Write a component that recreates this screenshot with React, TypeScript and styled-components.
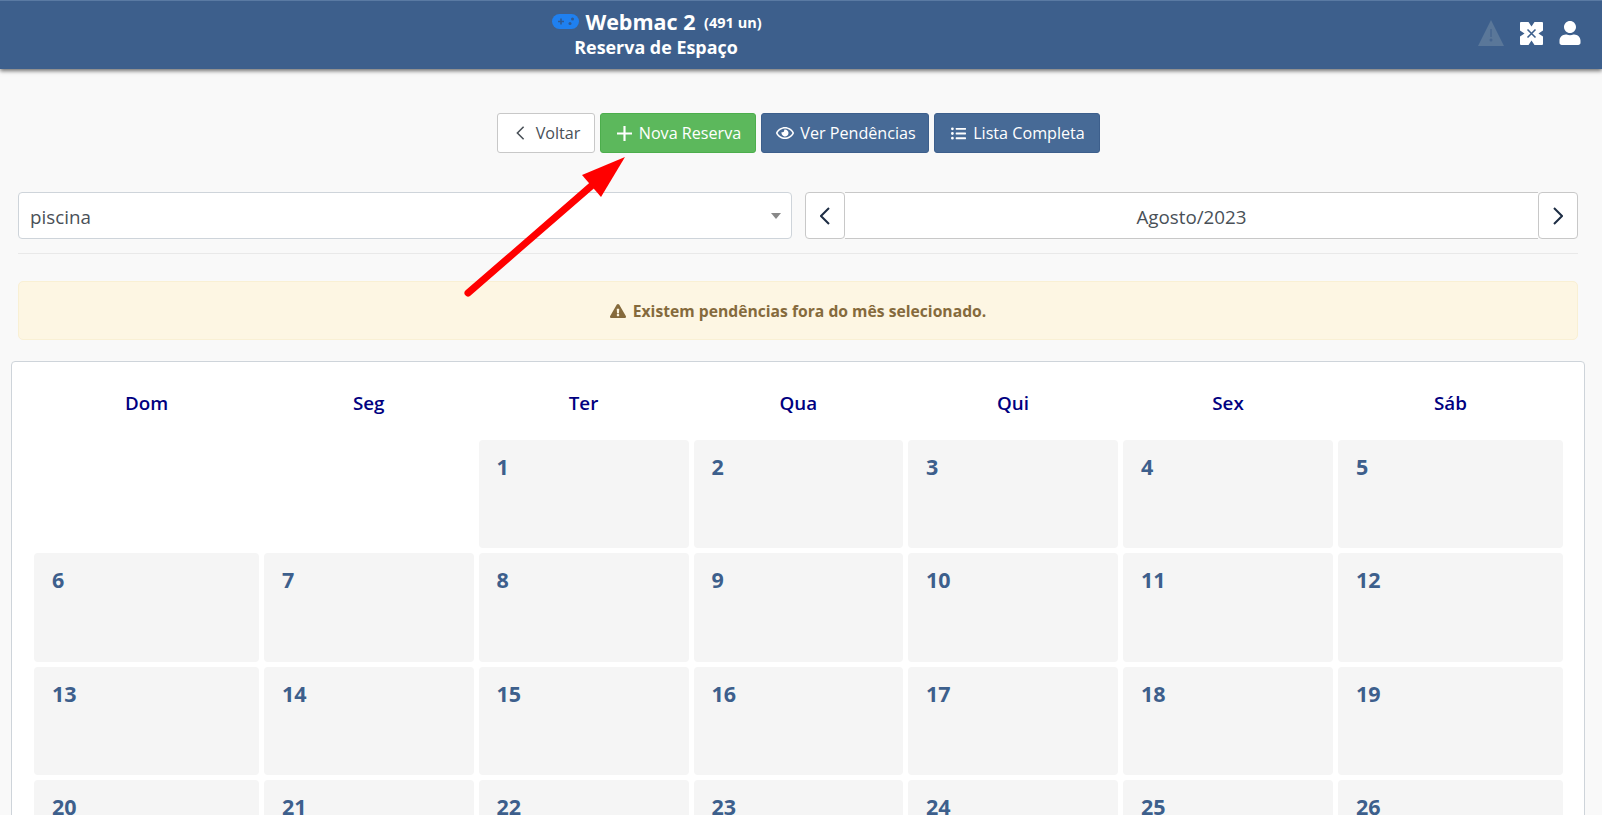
import styled, { createGlobalStyle } from 'styled-components'
import { FaExclamationTriangle, FaListUl, FaRegEye, FaUser } from 'react-icons/fa'

const weekDays = ['Dom', 'Seg', 'Ter', 'Qua', 'Qui', 'Sex', 'Sáb']
const firstWeekBlanks = 2
const daysInMonth = 31

const Chevron = ({ right = false }: { right?: boolean }) => (
  <svg viewBox="0 0 10 18" fill="none" stroke="currentColor" strokeWidth="2">
    <path d={right ? 'M1 1l8 8-8 8' : 'M9 1L1 9l8 8'} />
  </svg>
)

const PlusIcon = () => (
  <svg viewBox="0 0 14 14" fill="none" stroke="currentColor" strokeWidth="2">
    <path d="M7 0v14M0 7h14" />
  </svg>
)

const GamepadIcon = () => (
  <GamepadSvg viewBox="0 0 27 15">
    <rect width="27" height="15" rx="7.5" fill="#1f80f0" />
    <path d="M6 7.5h6M9 4.5v6" stroke="#2f5a94" strokeWidth="1.6" />
    <circle cx="20.5" cy="5" r="1.5" fill="#2f5a94" />
    <circle cx="18" cy="9.5" r="1.5" fill="#2f5a94" />
  </GamepadSvg>
)

const ExpandIcon = () => (
  <ExpandSvg viewBox="0 0 23 23" width="23" height="23">
    <rect width="23" height="23" rx="1" fill="#fff" />
    <path d="M7.5 7.5l8 8M15.5 7.5l-8 8" stroke="#3d5f8c" strokeWidth="1.6" />
    <path d="M8.5 0h6l-3 4.5zM8.5 23h6l-3-4.5zM0 8.5v6l4.5-3zM23 8.5v6l-4.5-3z" fill="#3d5f8c" />
  </ExpandSvg>
)

const App = () => {
  const days = Array.from({ length: daysInMonth }, (_, idx) => idx + 1)

  return (
    <>
      <GlobalStyle />
      <Header>
        <TitleBlock>
          <Brand>
            <GamepadIcon />
            Webmac 2 <small>(491 un)</small>
          </Brand>
          <PageName>Reserva de Espaço</PageName>
        </TitleBlock>
        <HeaderIcons>
          <WarningIcon viewBox="0 0 26 26" width="26" height="26">
            <path d="M13 0L26 26H0z" fill="#5a7799" />
            <path d="M13 9v8" stroke="#46658f" strokeWidth="1.4" />
            <circle cx="13" cy="20" r="1.5" fill="#46658f" />
          </WarningIcon>
          <ExpandIcon />
          <FaUser />
        </HeaderIcons>
      </Header>

      <Toolbar>
        <ActionButton $variant="light" $width={98}>
          <ChevronSlot>
            <Chevron />
          </ChevronSlot>
          Voltar
        </ActionButton>
        <ActionButton $variant="success" $width={156}>
          <PlusIcon />
          Nova Reserva
        </ActionButton>
        <ActionButton $variant="primary" $width={168}>
          <EyeSlot>
            <FaRegEye />
          </EyeSlot>
          Ver Pendências
        </ActionButton>
        <ActionButton $variant="primary" $width={166}>
          <FaListUl />
          Lista Completa
        </ActionButton>
      </Toolbar>

      <Filters>
        <SelectBox>
          piscina
          <Caret />
        </SelectBox>
        <MonthNav>
          <NavButton>
            <Chevron />
          </NavButton>
          <MonthLabel>Agosto/2023</MonthLabel>
          <NavButton>
            <Chevron right />
          </NavButton>
        </MonthNav>
      </Filters>
      <Divider />

      <Alert>
        <FaExclamationTriangle />
        Existem pendências fora do mês selecionado.
      </Alert>

      <CalendarCard>
        <CalendarGrid>
          {weekDays.map((day) => (
            <WeekDay key={day}>{day}</WeekDay>
          ))}
          {Array.from({ length: firstWeekBlanks }, (_, idx) => (
            <div key={idx} />
          ))}
          {days.map((day) => (
            <DayCell key={day}>{day}</DayCell>
          ))}
        </CalendarGrid>
      </CalendarCard>

      <ArrowOverlay width="200" height="170" viewBox="0 0 200 170">
        <line x1="13" y1="156" x2="142" y2="44" stroke="#ff0000" strokeWidth="7" strokeLinecap="round" />
        <polygon points="170,20 127,38 146,60" fill="#ff0000" />
      </ArrowOverlay>
    </>
  )
}

export default App

const GlobalStyle = createGlobalStyle`
  html, body {
    margin: 0;
    height: 100%;
    overflow: hidden;
    background: #f9f9f9;
    font-family: "Open Sans", "Liberation Sans", sans-serif;
    color: #495057;
  }
  * {
    box-sizing: border-box;
  }
`

const Header = styled.header`
  height: 69px;
  display: flex;
  align-items: flex-start;
  background: #3d5f8c;
  border-top: 1px solid #5a7aa3;
  box-shadow: 0 2px 4px rgba(0, 0, 0, 0.55);
  color: #fff;
`

const TitleBlock = styled.div`
  width: 1312px;
  padding-top: 6px;
  text-align: center;
`

const GamepadSvg = styled.svg`
  width: 27px;
  height: 15px;
`

const ExpandSvg = styled.svg`
  margin-right: -2px;
`

const Brand = styled.div`
  display: flex;
  align-items: center;
  justify-content: center;
  gap: 6px;
  height: 28px;
  padding-left: 2px;
  font-size: 21.5px;
  font-weight: 700;
  white-space: pre;
  & > svg {
    margin-right: 0;
  }
  & > small {
    margin-left: -3px;
    font-size: 14.5px;
    padding-top: 3px;
  }
`

const PageName = styled.div`
  font-size: 17.9px;
  font-weight: 700;
  line-height: 24px;
`

const HeaderIcons = styled.div`
  flex: 1;
  display: flex;
  align-items: center;
  justify-content: flex-end;
  gap: 17px;
  height: 64px;
  padding-right: 20px;
  font-size: 24px;
  & > svg {
    display: block;
  }
`

const WarningIcon = styled.svg`
  margin-right: -1px;
`

const Toolbar = styled.div`
  display: flex;
  justify-content: flex-start;
  gap: 5px;
  margin: 44px 0 0 497px;
`

const variants = {
  light: 'background: #fff; border-color: #c8c8c8; color: #495057;',
  success: 'background: #5cb85c; border-color: #4cae4c; color: #fff;',
  primary: 'background: #476a96; border-color: #3d5f8c; color: #fff;',
}

const ActionButton = styled.button<{ $variant: keyof typeof variants; $width: number }>`
  display: flex;
  align-items: center;
  justify-content: center;
  gap: 7px;
  width: ${({ $width }) => $width}px;
  height: 40px;
  padding: 0 0 0 2px;
  border: 1px solid;
  border-radius: 3px;
  font-family: inherit;
  font-size: 16.15px;
  ${({ $variant }) => variants[$variant]}
  & > svg {
    width: 15px;
    height: 15px;
    flex-shrink: 0;
  }
`

const ChevronSlot = styled.span`
  display: flex;
  width: 9px;
  height: 14px;
  margin-left: 2px;
  margin-right: 4px;
  & > svg {
    width: 9px;
    height: 14px;
  }
`

const EyeSlot = styled.span`
  display: flex;
  margin-right: -1px;
  & > svg {
    width: 18px;
    height: 18px;
  }
`

const Filters = styled.div`
  display: grid;
  grid-template-columns: 774px 773px;
  gap: 13px;
  margin: 39px 0 0 18px;
`

const SelectBox = styled.div`
  position: relative;
  display: flex;
  align-items: center;
  height: 47px;
  padding: 2px 0 0 11px;
  background: #fff;
  border: 1px solid #ced4da;
  border-radius: 4px;
  font-size: 18.8px;
`

const Caret = styled.span`
  position: absolute;
  right: 10px;
  top: 20px;
  border-left: 5px solid transparent;
  border-right: 5px solid transparent;
  border-top: 6px solid #888;
`

const MonthNav = styled.div`
  display: flex;
  height: 47px;
`

const NavButton = styled.button`
  width: 40px;
  display: flex;
  align-items: center;
  justify-content: center;
  padding: 0;
  background: #fff;
  border: 1px solid #c8c8c8;
  border-radius: 4px;
  color: #1d2d44;
  & > svg {
    width: 10px;
    height: 18px;
  }
`

const MonthLabel = styled.div`
  flex: 1;
  display: flex;
  align-items: center;
  justify-content: center;
  padding-top: 2px;
  background: #fff;
  border-top: 1px solid #c8c8c8;
  border-bottom: 1px solid #c8c8c8;
  font-size: 18.8px;
`

const Divider = styled.hr`
  width: 1560px;
  margin: 14px 0 27px 18px;
  border: 0;
  border-top: 1px solid #e9e9e9;
`

const Alert = styled.div`
  width: 1560px;
  height: 59px;
  margin-left: 18px;
  display: flex;
  align-items: center;
  justify-content: center;
  gap: 7px;
  background: #fdf6e3;
  border: 1px solid #f9f0d4;
  border-radius: 5px;
  color: #856a3c;
  font-size: 15.7px;
  font-weight: 700;
  & > svg {
    width: 16px;
    height: 16px;
  }
`

const CalendarCard = styled.div`
  width: 1574px;
  margin: 21px 0 0 11px;
  padding: 0 21px 20px 22px;
  background: #fff;
  border: 1px solid #ced4da;
  border-radius: 4px;
`

const CalendarGrid = styled.div`
  display: grid;
  grid-template-columns: 225px 209.5px 210px 209.5px 210px 210px 225px;
  grid-template-rows: 73px;
  grid-auto-rows: 108.4px;
  gap: 5px;
`

const WeekDay = styled.div`
  padding-top: 28px;
  text-align: center;
  color: #000080;
  font-size: 18.8px;
  font-weight: 600;
`

const DayCell = styled.div`
  padding: 12px 18px;
  background: #f5f5f5;
  border-radius: 4px;
  color: #3d5f8c;
  font-size: 21.5px;
  font-weight: 700;
`

const ArrowOverlay = styled.svg`
  position: absolute;
  left: 455px;
  top: 137px;
`
